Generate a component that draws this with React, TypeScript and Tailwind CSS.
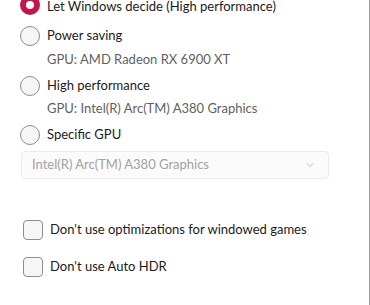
import { ChevronDown } from "lucide-react";

function Radio({ label, checked = false }: { label: string; checked?: boolean }) {
  return (
    <div className="flex h-[20px] items-center gap-[7px]">
      {checked ? (
        <span className="flex h-[20px] w-[20px] items-center justify-center rounded-full bg-[#c3174c]">
          <span className="h-[8px] w-[8px] rounded-full bg-white" />
        </span>
      ) : (
        <span className="h-[20px] w-[20px] rounded-full border border-[#8d8d8d] bg-[#f6f6f6]" />
      )}
      <span className={checked ? "pt-[4px] text-[13px] text-[#1b1b1b]" : "text-[13px] text-[#1b1b1b]"}>
        {label}
      </span>
    </div>
  );
}

function Checkbox({ label }: { label: string }) {
  return (
    <div className="flex h-[20px] items-center gap-[7px] pl-[3px]">
      <span className="h-[20px] w-[20px] rounded-[4px] border border-[#8d8d8d] bg-[#f6f6f6]" />
      <span className="text-[13px] text-[#1b1b1b]">{label}</span>
    </div>
  );
}

export default function App() {
  return (
    <div
      className="h-[305px] w-[370px] overflow-hidden border-r border-[#9a9a9a] bg-white"
      style={{ fontFamily: 'Lato, sans-serif' }}
    >
      <div className="-mt-[5px] flex flex-col pl-[20px]">
        <Radio label="Let Windows decide (High performance)" checked />
        <div className="mt-[11px]">
          <Radio label="Power saving" />
        </div>
        <p className="mt-[3px] h-[20px] pl-[27px] text-[13px] leading-[20px] text-[#5f5f5f]">
          GPU: AMD Radeon RX 6900 XT
        </p>
        <div className="mt-[7px]">
          <Radio label="High performance" />
        </div>
        <p className="mt-[2px] h-[20px] pl-[27px] text-[13px] leading-[20px] text-[#5f5f5f]">
          GPU: Intel(R) Arc(TM) A380 Graphics
        </p>
        <div className="mt-[7px]">
          <Radio label="Specific GPU" />
        </div>
        <div className="mt-[6px] ml-[1px] flex h-[28px] w-[308px] items-center justify-between rounded-[4px] border border-[#ebebeb] bg-[#fbfbfb] pl-[10px] pr-[12px]">
          <span className="text-[13px] text-[#a2a2a2]">Intel(R) Arc(TM) A380 Graphics</span>
          <ChevronDown className="h-[12px] w-[12px] text-[#a8a8a8]" strokeWidth={1.5} />
        </div>
        <div className="mt-[41px]">
          <Checkbox label="Don't use optimizations for windowed games" />
        </div>
        <div className="mt-[17px]">
          <Checkbox label="Don't use Auto HDR" />
        </div>
      </div>
    </div>
  );
}
